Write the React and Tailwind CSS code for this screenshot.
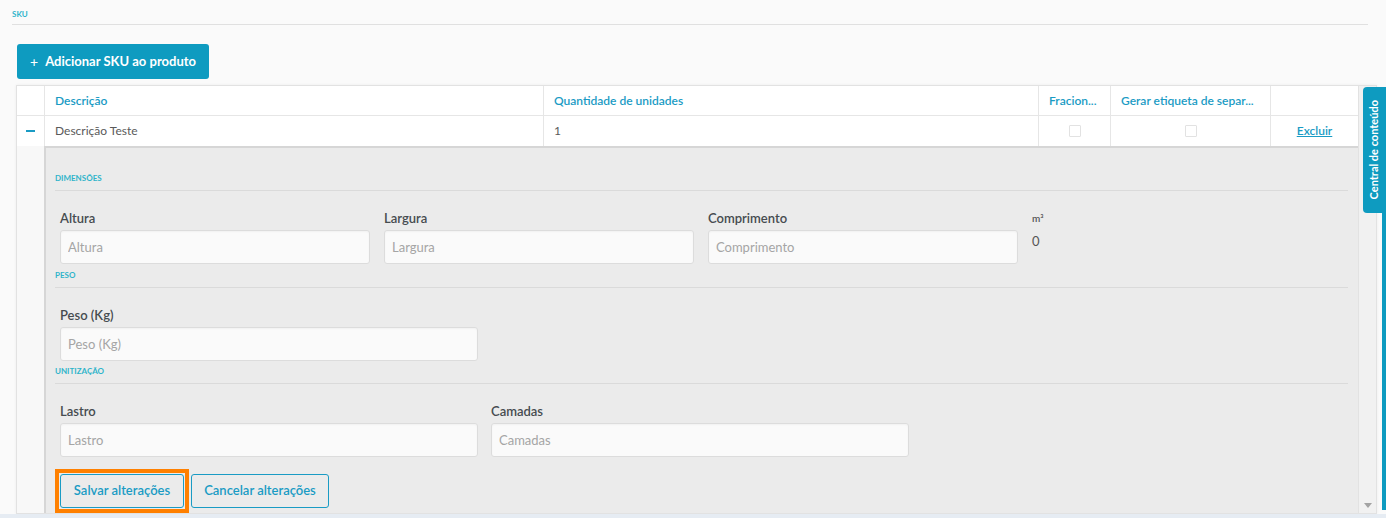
import React from 'react'

function Field({ label, placeholder, className = '' }) {
  return (
    <div className={className}>
      <div className="text-[13px] font-semibold leading-4 text-[#464c50]">{label}</div>
      <input
        placeholder={placeholder}
        className="mt-1 h-[34px] w-full rounded-[3px] border border-[#dcdcdc] bg-[#fafafa] px-[7px] text-[13px] text-[#555] shadow-[inset_0_1px_2px_rgba(0,0,0,0.04)] outline-none placeholder:text-[#a5a5a5]"
      />
    </div>
  )
}

function Section({ title, children }) {
  return (
    <div>
      <div className="border-b border-[#dadada] pb-[7px] text-[8px] font-bold uppercase leading-[10px] text-[#2fb4ca]">
        {title}
      </div>
      <div className="pl-[5px] pt-[19px]">{children}</div>
    </div>
  )
}

export default function App() {
  const cell = 'flex items-center border-l border-[#e6e6e6] px-[10px]'
  return (
    <div className="relative h-[518px] overflow-hidden bg-[#fafafa] font-['Lato','Open_Sans',sans-serif]">
      <div className="ml-[12px] mr-[18px] border-b border-[#e0e0e0] pb-[5px] pt-[9px] text-[8px] font-bold leading-[10px] text-[#2fb4ca]">
        SKU
      </div>

      <button
        type="button"
        className="ml-[17px] mt-[19px] flex h-[35px] w-[192px] items-center justify-center gap-[7px] rounded-[3px] bg-[#0e9bc0] text-[13px] font-bold text-white"
      >
        <span className="text-[14px] font-normal">+</span>
        Adicionar SKU ao produto
      </button>

      <div className="ml-[16px] mt-[6px] flex h-[429px] w-[1361px] overflow-hidden border border-[#e2e2e2] bg-white shadow-[0_0_3px_rgba(0,0,0,0.06)]">
        <div className="flex w-[1341px] flex-col">
          {/* header */}
          <div className="grid h-[30px] shrink-0 grid-cols-[27px_499px_495px_72px_160px_88px] border-b border-[#e6e6e6] text-[12px] font-semibold text-[#1a9bc4]">
            <div />
            <div className={cell}>Descrição</div>
            <div className={cell}>Quantidade de unidades</div>
            <div className={cell}>Fracion...</div>
            <div className={cell}>Gerar etiqueta de separ...</div>
            <div className={cell} />
          </div>

          {/* row */}
          <div className="grid h-[30px] shrink-0 grid-cols-[27px_499px_495px_72px_160px_88px] text-[12px] text-[#5a5a5a]">
            <div className="flex items-center justify-center">
              <div className="h-[2px] w-[9px] bg-[#1a9bc4]" />
            </div>
            <div className={cell}>Descrição Teste</div>
            <div className={cell}>1</div>
            <div className={cell}>
              <div className="mx-auto h-[12px] w-[12px] rounded-[1px] border border-[#e2e2e2] bg-white" />
            </div>
            <div className={cell}>
              <div className="mx-auto h-[12px] w-[12px] rounded-[1px] border border-[#e2e2e2] bg-white" />
            </div>
            <div className={cell + ' justify-center'}>
              <a className="font-semibold text-[#1a9bc4] underline">Excluir</a>
            </div>
          </div>

          {/* expanded detail */}
          <div className="flex flex-1">
            <div className="w-[27px] shrink-0 bg-[#f8f8f8]" />
            <div className="flex-1 border-l-2 border-t-2 border-[#d6d6d6] bg-[#ebebeb] pl-[9px] pr-[10px] pt-[25px]">
              <Section title="Dimensões">
                <div className="flex gap-[14px]">
                  <Field label="Altura" placeholder="Altura" className="w-[310px]" />
                  <Field label="Largura" placeholder="Largura" className="w-[310px]" />
                  <Field label="Comprimento" placeholder="Comprimento" className="w-[310px]" />
                  <div className="text-[#555]">
                    <div className="text-[10px] font-semibold leading-4">m³</div>
                    <div className="mt-[6px] text-[13px]">0</div>
                  </div>
                </div>
              </Section>

              <div className="mt-[6px]">
                <Section title="Peso">
                  <Field label="Peso (Kg)" placeholder="Peso (Kg)" className="w-[418px]" />
                </Section>
              </div>

              <div className="mt-[5px]">
                <Section title="Unitização">
                  <div className="flex gap-[13px]">
                    <Field label="Lastro" placeholder="Lastro" className="w-[418px]" />
                    <Field label="Camadas" placeholder="Camadas" className="w-[418px]" />
                  </div>
                  <div className="mt-[17px] flex gap-[7px]">
                    <div className="relative">
                      <button
                        type="button"
                        className="h-[34px] w-[124px] rounded-[3px] border border-[#1a9bc4] text-[13px] font-semibold text-[#1a9bc4]"
                      >
                        Salvar alterações
                      </button>
                      <div className="pointer-events-none absolute -inset-[5px] border-4 border-[#ff8000]" />
                    </div>
                    <button
                      type="button"
                      className="h-[34px] w-[138px] rounded-[3px] border border-[#1a9bc4] text-[13px] font-semibold text-[#1a9bc4]"
                    >
                      Cancelar alterações
                    </button>
                  </div>
                </Section>
              </div>
            </div>
          </div>
        </div>

        {/* scrollbar */}
        <div className="flex w-[18px] flex-col items-center justify-end border-l border-[#e2e2e2] bg-[#f1f1f1] pb-[5px]">
          <svg width="8" height="5" viewBox="0 0 8 5">
            <path d="M0 0h8L4 5z" fill="#a3a3a3" />
          </svg>
        </div>
      </div>

      <div className="h-[4px] bg-[#e6ecf3]" />

      {/* side tab */}
      <div className="absolute right-0 top-[87px] h-[423px] w-[4px] bg-[#0e9bc0]" />
      <div className="absolute right-0 top-[87px] flex h-[126px] w-[23px] items-center justify-center rounded-l-[4px] bg-[#0e9bc0]">
        <span className="rotate-180 text-[11px] font-bold text-white [writing-mode:vertical-rl]">Central de conteúdo</span>
      </div>
    </div>
  )
}
